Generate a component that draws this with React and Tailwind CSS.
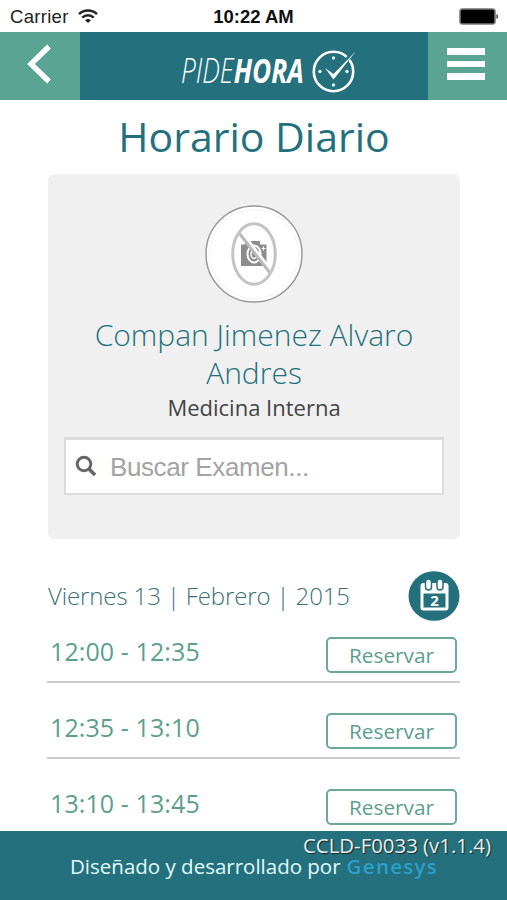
import React from "react";

const slots = ["12:00 - 12:35", "12:35 - 13:10", "13:10 - 13:45"];

function StatusBar() {
  return (
    <div className="flex h-8 shrink-0 items-center pt-0.5 font-['Liberation_Sans',Arial,sans-serif] text-[18.5px] text-[#222]">
      <div className="flex flex-1 items-center gap-[9px] pl-[10px]">
        <span className="tracking-[0.3px]">Carrier</span>
        <svg className="mb-px" width="20" height="15" viewBox="0 0 20 15" fill="none" stroke="#222" strokeWidth="2.5">
          <path d="M1 5.2C6 .3 14 .3 19 5.2" />
          <path d="M4.3 8.6c3.2-3.1 8.2-3.1 11.4 0" />
          <path d="M7 11.2c1.8-1.5 4.2-1.5 6 0L10 14z" fill="#222" stroke="none" />
        </svg>
      </div>
      <span className="-ml-[2px] text-[18.500px] font-semibold text-[#111]">10:22 AM</span>
      <div className="flex flex-1 justify-end pr-[8px]">
        <svg className="-mt-0.5" width="40" height="17" viewBox="0 0 40 17">
          <rect x="1" y="1" width="35" height="15" rx="2.5" fill="#000" stroke="#777" strokeWidth="1.6" />
          <path d="M37.5 6c2 .5 2 4.500 0 5z" fill="#333" />
        </svg>
      </div>
    </div>
  );
}

function Header() {
  return (
    <header className="flex h-[68px] shrink-0 bg-[#24717d] text-white">
      <button className="w-20 bg-[#59a492]">
        <svg width="80" height="68" viewBox="0 0 80 68" fill="none" stroke="#fff" strokeWidth="5.4">
          <path d="M49 14.500 31 32l18 17.500" />
        </svg>
      </button>
      <div className="flex w-[348px] items-center pl-[101px]">
        <div className="h-12 w-[123px] pt-[7px]">
          <div className="flex w-max origin-left scale-x-[0.76] text-[34.5px] leading-[42px] italic">
            <span className="font-light">PIDE</span>
            <span className="font-bold">HORA</span>
          </div>
        </div>
        <svg className="mt-[7px] ml-[8px]" width="46" height="48" viewBox="0 0 46 48" fill="none">
          <circle cx="21.500" cy="25.500" r="19.700" stroke="#fff" strokeWidth="2.600" />
          <path d="m35 13.500 7-7" stroke="#24717d" strokeWidth="4" />
          <path d="m13 22 8.500 6L44 5 21.500 33.500z" fill="#fff" />
          <g fill="#e0f5f7">
            <circle cx="21.500" cy="12" r="1.700" />
            <circle cx="8" cy="25.500" r="1.700" />
            <circle cx="35" cy="25.500" r="1.700" />
            <circle cx="21.500" cy="39" r="1.700" />
          </g>
        </svg>
      </div>
      <button className="flex w-[79px] flex-col gap-[6px] bg-[#59a492] pt-4 pl-[19px]">
        <span className="block h-[6.500px] w-[38px] bg-white" />
        <span className="block h-[6.500px] w-[38px] bg-white" />
        <span className="block h-[6.500px] w-[38px] bg-white" />
      </button>
    </header>
  );
}

function Avatar() {
  return (
    <svg className="shrink-0" width="98" height="98" viewBox="0 0 98 98" fill="none">
      <circle cx="49" cy="49" r="48" fill="#fff" stroke="#999" strokeWidth="1.500" />
      <circle cx="49" cy="49" r="44.500" stroke="#f3f3f3" />
      <path d="M36 39.500h4V36h15v3.500h6.500V61H36z" fill="#8c8c8c" />
      <ellipse cx="49" cy="49" rx="6.500" ry="8.500" fill="#8c8c8c" stroke="#fff" strokeWidth="2" />
      <ellipse cx="49" cy="49" rx="3" ry="4.500" stroke="#fff" strokeWidth="1.500" />
      <path d="M56.500 43.500h4M58.500 41.500v4" stroke="#fff" />
      <path d="m36 28 31 40" stroke="#fff" strokeWidth="5" />
      <path d="m34.500 28.500 31 40" stroke="#bbb" strokeWidth="3" />
      <ellipse cx="49" cy="49" rx="21.300" ry="30.200" stroke="#c4c4c4" strokeWidth="3" />
    </svg>
  );
}

function CalendarIcon() {
  return (
    <svg width="52" height="50" viewBox="0 0 52 50">
      <ellipse cx="26" cy="25" rx="25.500" ry="24.800" fill="#24717d" />
      <rect x="12.500" y="12" width="28" height="27.500" rx="3" fill="#fff" />
      <rect x="15.500" y="22.500" width="22" height="14" fill="#24717d" />
      <rect x="17.500" y="8" width="6" height="11" rx="3" fill="#fff" stroke="#24717d" strokeWidth="1.500" />
      <rect x="29" y="8" width="6" height="11" rx="3" fill="#fff" stroke="#24717d" strokeWidth="1.500" />
      <text x="26.500" y="35" textAnchor="middle" fontSize="15" fontWeight="700" fill="#fff">2</text>
    </svg>
  );
}

export default function App() {
  return (
    <div className="flex h-[900px] w-[507px] flex-col overflow-hidden bg-white font-['Open_Sans','Noto_Sans',sans-serif]">
      <StatusBar />
      <Header />
      <main className="flex h-[731px] shrink-0 flex-col overflow-hidden pr-[47px] pl-12">
        <h1 className="h-[74px] shrink-0 text-center text-[41px] leading-[72px] whitespace-nowrap text-[#24717d]">Horario Diario</h1>
        <section className="flex h-[365px] shrink-0 flex-col items-center rounded-md bg-[#f0f0f0] pt-[31px]">
          <Avatar />
          <h2 className="mt-[13px] w-[340px] text-center text-[30px] leading-[38px] font-light text-[#24717d]">Compan Jimenez Alvaro Andres</h2>
          <p className="text-[22px] leading-[30px] text-[#444]">Medicina Interna</p>
          <div className="mt-[15px] flex h-[58px] w-[380px] items-center border-2 border-t-[3px] border-[#dcdcdc] bg-white pl-[9px]">
            <svg className="mb-0.5" width="22" height="22" viewBox="0 0 22 22" fill="none" stroke="#666" strokeWidth="3">
              <circle cx="9" cy="9" r="6.800" />
              <path d="m14 14 6 6" strokeWidth="3.500" />
            </svg>
            <span className="ml-[13px] pt-0.5 font-['Liberation_Sans',Arial,sans-serif] text-[26px] tracking-[-0.4px] text-[#a3a3a3]">Buscar Examen...</span>
          </div>
        </section>
        <div className="mt-[31px] flex h-[51px] shrink-0 items-center justify-between">
          <span className="text-[24px] tracking-[-0.12px] font-light text-[#3b7078]">Viernes 13 | Febrero | 2015</span>
          <CalendarIcon />
        </div>
        <ul className="shrink-0">
          {slots.map((slot) => (
            <li key={slot} className="-ml-px flex h-[76px] items-end justify-between border-b-2 border-[#cbcbcb] pr-[3px] pb-[8px] pl-[3px] first:h-[62px]">
              <span className="mb-[5px] text-[25px] leading-[34px] tracking-[0.1px] text-[#5c9f8d]">{slot}</span>
              <button className="h-9 w-[131px] rounded-[5px] border-2 border-[#6aa898] text-[20.800px] leading-[33px] text-[#5c9f8d]">Reservar</button>
            </li>
          ))}
        </ul>
      </main>
      <footer className="h-[69px] shrink-0 bg-[#24717d] pt-[4px] text-white">
        <p className="pr-4 text-right text-[20.400px] leading-[21px] text-[#e5eff1] [text-shadow:1px_1px_1px_#222]">CCLD-F0033 (v1.1.4)</p>
        <p className="flex pl-[70px] text-[20.500px] leading-[21px] text-[#e0fbfd]">
          <span>Diseñado y desarrollado por</span>
          <span className="ml-[6px] font-semibold tracking-[1.300px] text-[#2b9fcd]">Genesys</span>
        </p>
      </footer>
    </div>
  );
}
